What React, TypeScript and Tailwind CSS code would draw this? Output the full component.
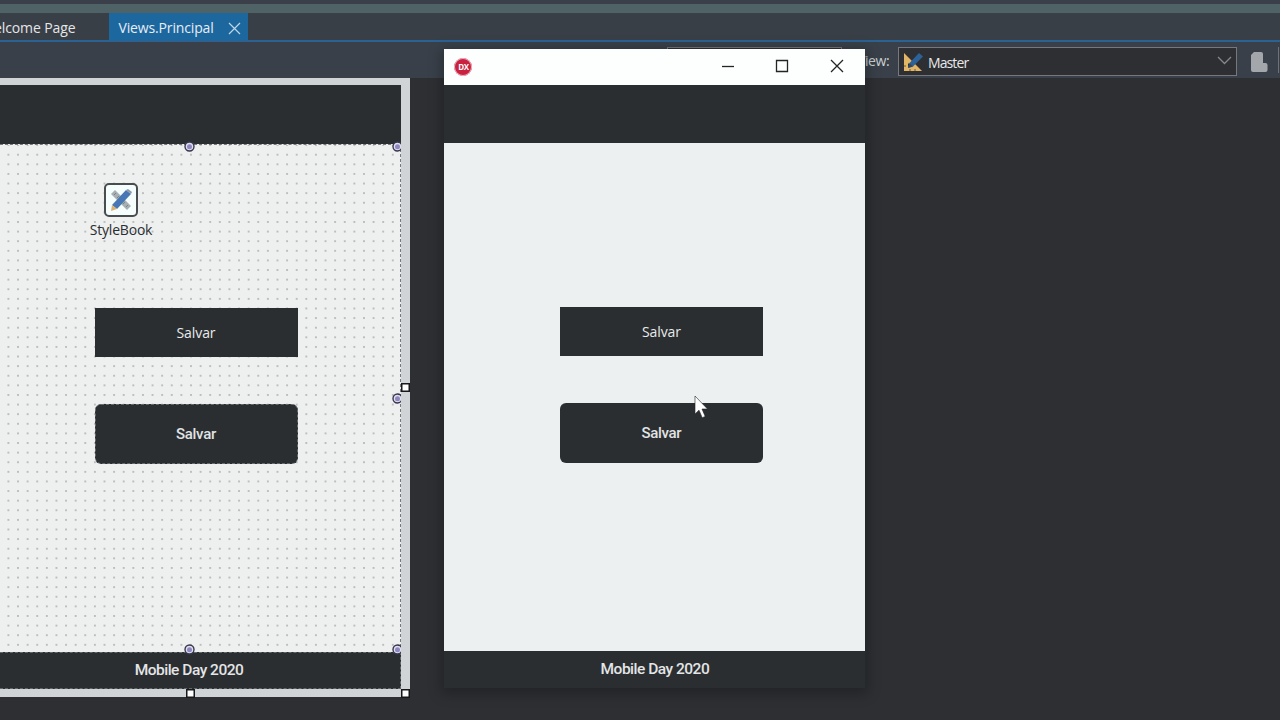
import { ReactNode } from 'react';

const Tabs = () => (
  <div className="flex h-[27px] bg-[#393f47] text-[#e4e6e8] text-[14px]">
    <div className="flex w-[109px] justify-end pr-[33.5px] pt-[5px]">
      <span className="whitespace-nowrap leading-5 tracking-[-0.1px]">Welcome Page</span>
    </div>
    <div className="flex w-[139px] items-start justify-between bg-[#1d679f] pl-[9.5px] pr-[7px] pt-[5px]">
      <span className="whitespace-nowrap leading-5 text-[#e6edf4] tracking-[-0.15px]">Views.Principal</span>
      <svg width="13" height="13" viewBox="0 0 13 13" stroke="#bdd7ea" strokeWidth="1.2" className="mt-[4px]">
        <path d="M1 1l11 11M12 1L1 12" />
      </svg>
    </div>
  </div>
);

const MasterIcon = () => (
  <svg width="20" height="20" viewBox="0 0 20 20">
    <path d="M1 1v18h18z" fill="#e3b566" />
    <path d="M5 11v4h4z" fill="#2d2f33" />
    <path d="M1 14h2M7 19v-2M12 19v-2" stroke="#6b5836" strokeWidth="1" />
    <path d="M5 16l1.500-5L16 1l4 3.500-10 10z" fill="#2c6298" />
    <path d="M5 16l1.500-5 3.500 3.500z" fill="#35475c" />
  </svg>
);

const Toolbar = () => (
  <div className="flex h-9 items-start justify-end bg-[#394049] pt-[5px]">
    <div className="h-[29px] w-[175px] border border-[#72767b] bg-[#2d2f33]" />
    <span className="ml-[15px] mr-[9px] w-[32px] pt-[4px] text-right text-[14px] leading-5 tracking-[-0.4px] text-[#cdd0d3]">View:</span>
    <div className="flex h-[29px] w-[339px] items-center border border-[#75797e] bg-[#2d2f33] pl-[4px] pr-1">
      <MasterIcon />
      <span className="ml-[5px] flex-1 pt-px text-[14px] tracking-[-0.9px] text-[#e8e9ea]">Master</span>
      <svg width="15" height="9" viewBox="0 0 15 9" fill="none" stroke="#84888c" strokeWidth="1.3" className="mb-0.5">
        <path d="M1 1l6.500 6.500L14 1" />
      </svg>
    </div>
    <svg width="17" height="20" viewBox="0 0 17 20" className="ml-[14px] mt-[5px]">
      <path d="M3 0h7q2 0 2 2v9h2.500q2 0 2 2v5q0 2-2 2H2q-2 0-2-2V3z" fill="#a3a7ab" />
    </svg>
    <div className="ml-[10px] mr-px h-[26px] w-px bg-[#6b7177]" />
  </div>
);

const RoundHandle = ({ className }: { className: string }) => (
  <svg width="11" height="11" viewBox="0 0 11 11" className={`absolute ${className}`}>
    <circle cx="5.500" cy="5.500" r="4.500" fill="#dfddf0" stroke="#34364a" strokeWidth="1.400" />
    <circle cx="5.500" cy="5.800" r="2.500" fill="#8f88c0" />
  </svg>
);

// handle on the right edge, its outer side is hidden by the form border
const EdgeHandle = ({ className }: { className: string }) => (
  <div className={`absolute h-[11px] w-[9px] overflow-hidden ${className}`}>
    <RoundHandle className="left-0 top-0" />
  </div>
);

const SquareHandle = ({ className }: { className: string }) => (
  <svg width="9" height="9" viewBox="0 0 9 9" className={`absolute ${className}`}>
    <path d="M.75.75h7.500v7.500H.75z" fill="#fff" stroke="#17181a" strokeWidth="1.500" />
  </svg>
);

const StyleBookIcon = () => (
  <div className="flex size-[34px] items-center justify-center rounded-[5px] border-2 border-[#4a4d4f] bg-[#f5fdfd]">
    <svg width="24" height="24" viewBox="0 0 24 24">
      <path d="M2 6l4-4 16 16-4 4z" fill="#a7afb2" />
      <path d="M5 7l2-2M8 10l2-2M14 16l2-2M17 19l2-2" stroke="#7b8588" />
      <path d="M3 17L17 2l5 4L8 21z" fill="#4777b4" />
      <path d="M17 2l2-1 4 3-1 2z" fill="#8e9aa8" />
      <path d="M3 17l5 4-6 2z" fill="#d9b273" />
    </svg>
  </div>
);

const FlatButton = () => (
  <div className="flex h-[49px] w-[203px] items-center justify-center bg-[#2b2e31] text-[14px] tracking-[-0.1px] text-[#e8eaeb]">
    Salvar
  </div>
);

const RoundedButton = ({ className = '' }: { className?: string }) => (
  <div className={`mt-[47px] flex h-[60px] w-[203px] items-center justify-center rounded-[6px] bg-[#2b2e31] font-['Roboto',sans-serif] text-[15px] font-medium tracking-[-0.3px] text-[#e0e3e4] ${className}`}>
    Salvar
  </div>
);

const FooterText = ({ children }: { children: ReactNode }) => (
  <span className="font-['Roboto',sans-serif] text-[15.5px] font-medium leading-5 tracking-[-0.5px] text-[#e3e5e6]">{children}</span>
);

const Designer = () => (
  <div className="relative flex h-[619px] w-[410px] flex-col border-b-8 border-r-[9px] border-t-[7px] border-[#d0d4d6] bg-[#2b2e31]">
    <div className="h-[59px]" />
    <div className="relative h-[508px] border-r border-t border-dashed border-[#75797b] bg-[#eef0f0]">
      <svg width="400" height="507" className="absolute left-0 top-0">
        <defs>
          <pattern id="grid" x="3.600" y="4.900" width="9.610" height="9.610" patternUnits="userSpaceOnUse">
            <circle cx="4.800" cy="4.800" r="0.800" fill="#7c8080" />
          </pattern>
        </defs>
        <rect width="400" height="507" fill="url(#grid)" />
      </svg>
      <div className="relative flex flex-col pl-[94.5px]">
        <div className="ml-[-23.500px] mt-[38px] flex w-[100px] flex-col items-center">
          <StyleBookIcon />
          <span className="mt-[3px] text-[14px] leading-5 tracking-[-0.2px] text-[#2b2e31]">StyleBook</span>
        </div>
        <div className="mt-[68px]">
          <FlatButton />
          <RoundedButton className="border border-dashed border-[#686c6f]" />
        </div>
      </div>
    </div>
    <div className="flex h-[37px] justify-center border-b border-r border-t border-dashed border-[#65696c] pr-[22px] pt-[7px]">
      <FooterText>Mobile Day 2020</FooterText>
    </div>
    <RoundHandle className="left-[184px] top-[56px]" />
    <EdgeHandle className="left-[392px] top-[56px]" />
    <EdgeHandle className="left-[392px] top-[308px]" />
    <RoundHandle className="left-[184px] top-[559px]" />
    <EdgeHandle className="left-[392px] top-[559px]" />
    <SquareHandle className="left-[401px] top-[298px]" />
    <SquareHandle className="left-[185.5px] top-[604px]" />
    <SquareHandle className="left-[401px] top-[604px]" />
  </div>
);

const TitleBar = () => (
  <div className="flex h-9 items-center bg-[#fdfefe] pl-[10px] pr-[20px]">
    <div className="flex size-[18px] items-center justify-center rounded-full bg-[#c9213f] ring-1 ring-[#e9b6bf] ring-inset">
      <span className="text-[8px] font-bold leading-none tracking-[-0.5px] text-white">DX</span>
    </div>
    <svg width="125" height="14" viewBox="0 0 125 14" fill="none" stroke="#232425" strokeWidth="1.300" className="mb-[2px] ml-auto">
      <path d="M2 7.500h12" />
      <path d="M56.500 1.500h11v11h-11z" />
      <path d="M111 1l12 12M123 1l-12 12" />
    </svg>
  </div>
);

const AppWindow = () => (
  <div className="absolute left-[444.4px] top-[49px] flex w-[421px] flex-col shadow-[0_3px_12px_3px_rgba(0,0,0,0.25)]">
    <TitleBar />
    <div className="h-[58px] bg-[#2b2e31]" />
    <div className="h-[508px] bg-[#ecf0f0] pl-[115.5px] pt-[164px]">
      <FlatButton />
      <RoundedButton />
    </div>
    <div className="flex h-[37px] justify-center bg-[#2b2e31] pt-[8px]">
      <FooterText>Mobile Day 2020</FooterText>
    </div>
  </div>
);

export default function App() {
  return (
    <div className="relative h-[720px] w-[1280px] overflow-hidden bg-[#2d2f33] font-['Open_Sans','Noto_Sans',sans-serif]">
      <div className="h-1 bg-[#3a3f49]" />
      <div className="h-[9px] bg-[#4f6265]" />
      <Tabs />
      <div className="h-[2px] bg-[#2a6294]" />
      <Toolbar />
      <Designer />
      <AppWindow />
      {/* mouse cursor */}
      <svg width="16" height="25" viewBox="0 0 16 25" className="absolute left-[694px] top-[395px]">
        <path d="M1 1v18l4-3.800 3.200 7.500 3-1.300-3.200-7.400h5.500z" fill="#fff" stroke="#222426" strokeWidth=".6" />
      </svg>
    </div>
  );
}
